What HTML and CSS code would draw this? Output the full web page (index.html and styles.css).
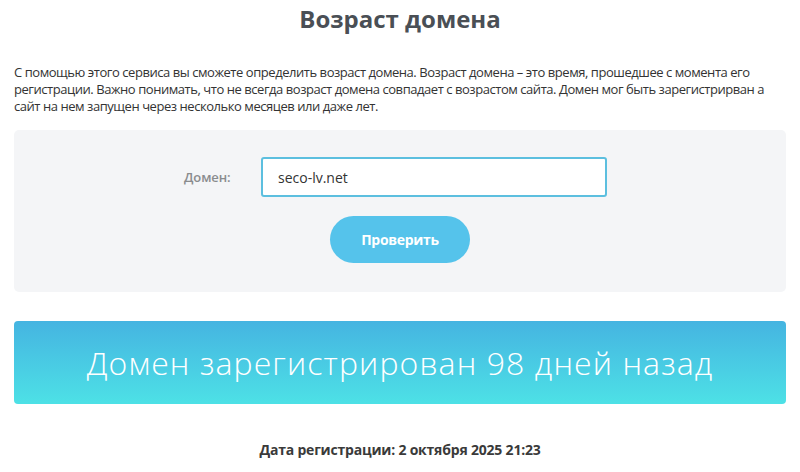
FILE: index.html
```html
<!DOCTYPE html>
<html lang="ru">
<head>
<meta charset="utf-8">
<title>Возраст домена</title>
<link rel="stylesheet" href="styles.css">
</head>
<body>
<main class="page">
  <h1 class="title">Возраст домена</h1>
  <p class="intro">С помощью этого сервиса вы сможете определить возраст домена. Возраст домена – это время, прошедшее с момента его регистрации. Важно понимать, что не всегда возраст домена совпадает с возрастом сайта. Домен мог быть зарегистрирван а сайт на нем запущен через несколько месяцев или даже лет.</p>
  <form class="check-form">
    <div class="field-row">
      <label class="field-label" for="domain">Домен:</label>
      <input class="field-input" id="domain" type="text" value="seco-lv.net">
    </div>
    <button class="btn-check" type="button">Проверить</button>
  </form>
  <div class="result">Домен зарегистрирован 98 дней назад</div>
  <p class="reg-date">Дата регистрации: 2 октября 2025 21:23</p>
</main>
</body>
</html>
```

FILE: styles.css
```css
* { box-sizing: border-box; }
html, body { margin: 0; padding: 0; background: #fff; }
body {
  font-family: "Open Sans", "Noto Sans", sans-serif;
  color: #333;
}
.page {
  padding: 0 14px;
}
.title {
  margin: 0;
  padding-top: 2px;
  height: 40px;
  text-align: center;
  font-size: 24px;
  font-weight: 700;
  color: #4a4f55;
  letter-spacing: 0;
}
.intro {
  margin: 24px 0 0;
  font-size: 13px;
  line-height: 17px;
  color: #333;
  letter-spacing: -0.45px;
}
.check-form {
  margin-top: 15px;
  background: #f4f5f7;
  border-radius: 5px;
  height: 162px;
  padding-top: 27px;
  display: flex;
  flex-direction: column;
  align-items: center;
}
.field-row {
  display: flex;
  align-items: center;
  margin-left: -9px;
}
.field-label {
  width: 77px;
  font-size: 13px;
  font-weight: 600;
  color: #8a8c8e;
  letter-spacing: -0.1px;
}
.field-input {
  width: 346px;
  height: 40px;
  border: 2px solid #5cbfdf;
  border-radius: 3px;
  padding: 0 15px;
  font-family: "Open Sans", sans-serif;
  font-size: 14px;
  color: #333;
  background: #fff;
  outline: none;
}
.btn-check {
  margin-top: 19px;
  width: 140px;
  height: 47px;
  border: none;
  border-radius: 24px;
  background: #55c3eb;
  color: #fff;
  font-family: "Open Sans", sans-serif;
  font-size: 14px;
  font-weight: 700;
  letter-spacing: -0.3px;
}
.result {
  margin-top: 29px;
  height: 83px;
  border-radius: 4px;
  background: linear-gradient(to bottom, #45b4e1, #4de1e6);
  color: #fff;
  font-size: 32px;
  font-weight: 300;
  display: flex;
  align-items: center;
  justify-content: center;
  letter-spacing: 1.1px;
}
.reg-date {
  margin: 36px 0 0;
  text-align: center;
  font-size: 14px;
  font-weight: 700;
  color: #3a3a3a;
  letter-spacing: -0.2px;
}
```
